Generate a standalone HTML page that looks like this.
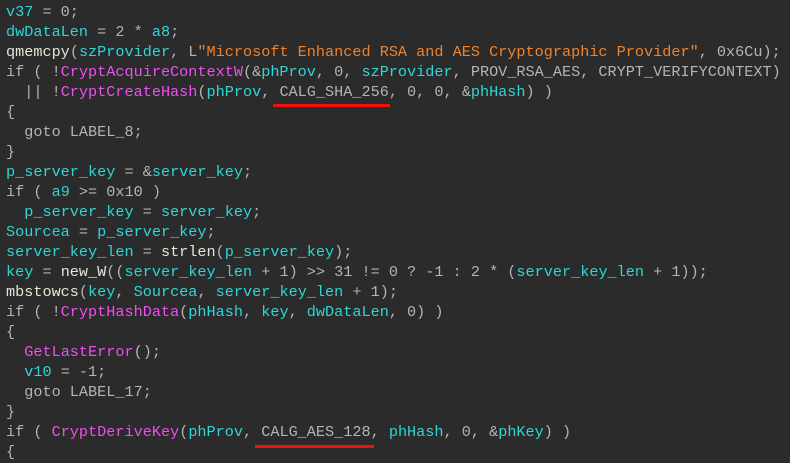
<!DOCTYPE html>
<html><head><meta charset="utf-8"><style>
html,body{margin:0;background:#2b2b2b;width:790px;height:463px;overflow:hidden}
body{position:relative}
#p{position:absolute;left:6px;top:2px;font-family:"Liberation Mono",monospace;font-size:15.2px;color:#b4b4b4}
#p div{display:block;height:20px;max-height:20px;line-height:20px;white-space:pre;overflow:visible}
.c{color:#2fd6d6}.m{color:#ef4ff0}.o{color:#f0822a}.w{color:#e6e6d4}
.u{position:absolute;height:3px;background:#f01010}
</style></head><body>
<div id="p">
<div><span class="c">v37</span> = 0;</div>
<div><span class="c">dwDataLen</span> = 2 * <span class="c">a8</span>;</div>
<div><span class="w">qmemcpy</span>(<span class="c">szProvider</span>, L<span class="o">"Microsoft Enhanced RSA and AES Cryptographic Provider"</span>, 0x6Cu);</div>
<div>if ( !<span class="m">CryptAcquireContextW</span>(&amp;<span class="c">phProv</span>, 0, <span class="c">szProvider</span>, PROV_RSA_AES, CRYPT_VERIFYCONTEXT)</div>
<div>  || !<span class="m">CryptCreateHash</span>(<span class="c">phProv</span>, CALG_SHA_256, 0, 0, &amp;<span class="c">phHash</span>) )</div>
<div>{</div>
<div>  goto LABEL_8;</div>
<div>}</div>
<div><span class="c">p_server_key</span> = &amp;<span class="c">server_key</span>;</div>
<div>if ( <span class="c">a9</span> &gt;= 0x10 )</div>
<div>  <span class="c">p_server_key</span> = <span class="c">server_key</span>;</div>
<div><span class="c">Sourcea</span> = <span class="c">p_server_key</span>;</div>
<div><span class="c">server_key_len</span> = <span class="w">strlen</span>(<span class="c">p_server_key</span>);</div>
<div><span class="c">key</span> = <span class="w">new_W</span>((<span class="c">server_key_len</span> + 1) &gt;&gt; 31 != 0 ? -1 : 2 * (<span class="c">server_key_len</span> + 1));</div>
<div><span class="w">mbstowcs</span>(<span class="c">key</span>, <span class="c">Sourcea</span>, <span class="c">server_key_len</span> + 1);</div>
<div>if ( !<span class="m">CryptHashData</span>(<span class="c">phHash</span>, <span class="c">key</span>, <span class="c">dwDataLen</span>, 0) )</div>
<div>{</div>
<div>  <span class="m">GetLastError</span>();</div>
<div>  <span class="c">v10</span> = -1;</div>
<div>  goto LABEL_17;</div>
<div>}</div>
<div>if ( <span class="m">CryptDeriveKey</span>(<span class="c">phProv</span>, CALG_AES_128, <span class="c">phHash</span>, 0, &amp;<span class="c">phKey</span>) )</div>
<div>{</div>
</div>
<div class="u" style="left:273px;top:104px;width:117px"></div>
<div class="u" style="left:255px;top:445px;width:119px"></div>
</body></html>
